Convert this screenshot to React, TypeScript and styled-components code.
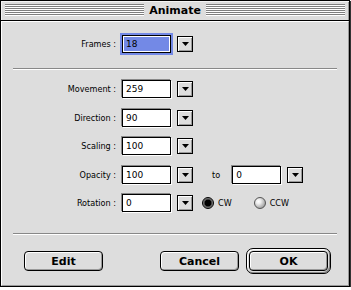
import React from 'react';
import styled, { createGlobalStyle } from 'styled-components';

const GlobalStyle = createGlobalStyle`
  html, body {
    margin: 0;
    padding: 0;
    background: #ffffff;
  }
  body {
    font-family: 'DejaVu Sans', sans-serif;
    color: #000;
  }
`;

const Window = styled.div`
  width: 350px;
  height: 287px;
  box-sizing: border-box;
  border: 1px solid #000;
  box-shadow: 1px 1px 0 #333;
  background: #dddddd;
  display: flex;
  flex-direction: column;
`;

const TitleBar = styled.div`
  height: 20px;
  box-sizing: border-box;
  border-bottom: 1px solid #000;
  padding: 3px 4px;
  display: flex;
  align-items: flex-start;
  background: #dddddd;
  box-shadow: inset 1px 1px 0 #f4f4f4, inset -1px 0 0 #999;
`;

const Stripes = styled.div`
  flex: 1;
  height: 12px;
  background: repeating-linear-gradient(
    to bottom,
    #7f7f7f 0 1px,
    #ffffff 1px 2px
  );
`;

const Title = styled.div`
  padding: 0 5px;
  margin-top: 1px;
  font-family: 'DejaVu Sans', sans-serif;
  font-weight: bold;
  font-size: 11px;
  line-height: 12px;
  white-space: nowrap;
`;

const Body = styled.div`
  flex: 1;
  border-top: 1px solid #fff;
  border-left: 1px solid #fff;
  border-right: 1px solid #999;
  border-bottom: 1px solid #999;
  padding: 13px 0 0;
  display: flex;
  flex-direction: column;
`;

const Separator = styled.div<{ $above: number; $below: number }>`
  height: 0;
  border-top: 1px solid #888;
  border-bottom: 1px solid #fff;
  margin: ${(p) => p.$above}px 11px ${(p) => p.$below}px;
`;

const Rows = styled.div`
  display: flex;
  flex-direction: column;
  gap: 10.5px;
`;

const Row = styled.div`
  display: flex;
  align-items: center;
  height: 18px;
`;

const labelFont = `
  font-family: 'DejaVu Sans Condensed', 'DejaVu Sans', sans-serif;
  font-stretch: condensed;
  font-size: 9px;
`;

const Label = styled.div`
  ${labelFont}
  width: 114px;
  margin-right: 6px;
  flex-shrink: 0;
  text-align: right;
  white-space: nowrap;
`;

const Field = styled.div<{ $focused?: boolean }>`
  width: 49px;
  height: 18px;
  box-sizing: border-box;
  border: 1px solid #000;
  background: #fff;
  padding-left: ${(p) => (p.$focused ? 1 : 3)}px;
  font-family: 'DejaVu Sans', sans-serif;
  font-size: 9px;
  line-height: 16px;
  box-shadow: ${(p) =>
    p.$focused
      ? '0 0 0 2px #7389e6'
      : '-1px -1px 0 #888, 1px 1px 0 #fff'};
`;

const Selection = styled.div`
  margin: 1px 1px 1px 0;
  height: 14px;
  line-height: 14px;
  padding-left: 2px;
  background: #7389e6;
`;

const DropButton = styled.div`
  width: 16px;
  height: 16px;
  box-sizing: border-box;
  margin-left: 6px;
  border: 1px solid #000;
  background: #dddddd;
  box-shadow: inset 1px 1px 0 #fff, inset -1px -1px 0 #999;
  display: flex;
  align-items: center;
  justify-content: center;
  flex-shrink: 0;
`;

const ToLabel = styled.div`
  ${labelFont}
  margin: 0 12px 0 19px;
`;

const RadioGroup = styled.div`
  display: flex;
  align-items: center;
  gap: 22px;
  margin-left: 9px;
`;

const RadioOption = styled.div`
  display: flex;
  align-items: center;
  gap: 4px;
  ${labelFont}
`;

const RadioDot = styled.div<{ $checked?: boolean }>`
  width: 12px;
  height: 12px;
  box-sizing: border-box;
  border-radius: 50%;
  border: 1px solid ${(p) => (p.$checked ? '#000' : '#555')};
  background: ${(p) =>
    p.$checked
      ? 'radial-gradient(circle at 50% 50%, #000 0 3px, #444 3.6px, #888 5px)'
      : 'radial-gradient(circle at 35% 35%, #fff 0, #eee 25%, #aaa 70%, #777 100%)'};
`;

const ButtonRow = styled.div`
  display: flex;
  align-items: center;
  padding: 0 17px 0 22px;
`;

const Spacer = styled.div`
  flex: 1;
`;

const Button = styled.div<{ $gap?: number }>`
  width: 79px;
  height: 20px;
  box-sizing: border-box;
  border: 1px solid #000;
  border-radius: 4px;
  background: #dddddd;
  box-shadow: inset 1px 1px 0 #fff, inset -1px -1px 0 #999;
  margin-right: ${(p) => p.$gap ?? 0}px;
  display: flex;
  align-items: center;
  justify-content: center;
  font-family: 'DejaVu Sans', sans-serif;
  font-weight: bold;
  font-size: 11px;
`;

const DefaultRing = styled.div`
  border: 1px solid #000;
  border-radius: 7px;
  padding: 2px;
  background: #dddddd;
  box-shadow: inset 1px 1px 0 #fff, inset -1px -1px 0 #888;
  display: flex;
`;

const Arrow = () => (
  <svg width="7" height="4" viewBox="0 0 7 4">
    <polygon points="0,0 7,0 3.5,4" fill="#000" />
  </svg>
);

type FieldRowProps = {
  label: string;
  value: string;
  children?: React.ReactNode;
};

const FieldRow: React.FC<FieldRowProps> = ({ label, value, children }) => (
  <Row>
    <Label>{label}</Label>
    <Field>{value}</Field>
    <DropButton>
      <Arrow />
    </DropButton>
    {children}
  </Row>
);

const App: React.FC = () => {
  return (
    <>
      <GlobalStyle />
      <Window>
        <TitleBar>
          <Stripes />
          <Title>Animate</Title>
          <Stripes />
        </TitleBar>
        <Body>
          <Row>
            <Label>Frames :</Label>
            <Field $focused>
              <Selection>18</Selection>
            </Field>
            <DropButton>
              <Arrow />
            </DropButton>
          </Row>
          <Separator $above={15} $below={10} />
          <Rows>
            <FieldRow label="Movement :" value="259" />
            <FieldRow label="Direction :" value="90" />
            <FieldRow label="Scaling :" value="100" />
            <FieldRow label="Opacity :" value="100">
              <ToLabel>to</ToLabel>
              <Field>0</Field>
              <DropButton>
                <Arrow />
              </DropButton>
            </FieldRow>
            <FieldRow label="Rotation :" value="0">
              <RadioGroup>
                <RadioOption>
                  <RadioDot $checked />
                  CW
                </RadioOption>
                <RadioOption>
                  <RadioDot />
                  CCW
                </RadioOption>
              </RadioGroup>
            </FieldRow>
          </Rows>
          <Separator $above={21} $below={13} />
          <ButtonRow>
            <Button>Edit</Button>
            <Spacer />
            <Button $gap={7}>Cancel</Button>
            <DefaultRing>
              <Button>OK</Button>
            </DefaultRing>
          </ButtonRow>
        </Body>
      </Window>
    </>
  );
};

export default App;
